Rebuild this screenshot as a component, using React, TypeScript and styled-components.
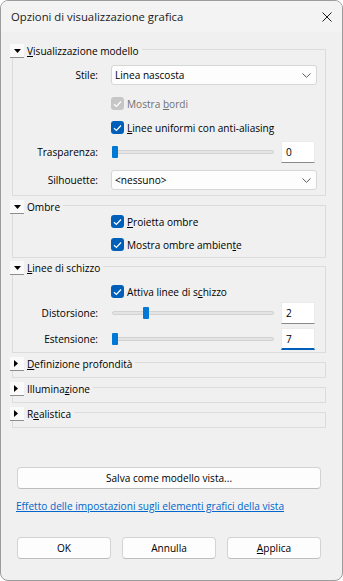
import React from 'react';
import styled, { createGlobalStyle } from 'styled-components';

const Global = createGlobalStyle`
  html, body { margin: 0; padding: 0; background: #ffffff; }
  body { font-family: "Open Sans", "Noto Sans", sans-serif; font-size: 10.1px; color: #000; }
  * { box-sizing: border-box; }
`;

const Window = styled.div`
  width: 343px;
  height: 581px;
  border: 1px solid #9c9c9c;
  border-radius: 8px;
  background: #f0f0f0;
  overflow: hidden;
  display: flex;
  flex-direction: column;
`;

const TitleBar = styled.div`
  height: 31px;
  flex: none;
  display: flex;
  align-items: center;
  justify-content: space-between;
  padding: 0 10px;
  background: #f3f3f3;
`;

const Title = styled.span`
  font-size: 11.3px;
  color: #1a1a1a;
`;

const Body = styled.div`
  display: flex;
  flex-direction: column;
  padding: 0 16px 0 11px;
`;

const GroupBox = styled.section<{ $mt: number; $pb: number }>`
  margin-top: ${(p) => p.$mt}px;
  padding-bottom: ${(p) => p.$pb}px;
  border: 1px solid #dcdcdc;
  display: flex;
  flex-direction: column;
`;

const GroupHeader = styled.div`
  display: flex;
  align-items: center;
  align-self: flex-start;
  height: 14px;
  margin: -6px 0 0 -3px;
  padding-right: 3px;
  background: #f0f0f0;
`;

const Toggle = styled.span`
  width: 14px;
  height: 14px;
  flex: none;
  display: flex;
  align-items: center;
  padding-left: 4px;
  background: #fafafa;
  border-bottom: 1px solid #8e8e8e;
`;

const GroupTitle = styled.span`
  margin-left: 3px;
  line-height: 14px;
  white-space: nowrap;
`;

const Acc = styled.span`
  text-decoration: underline;
  text-underline-offset: 1px;
`;

const FieldRow = styled.div<{ $mt: number }>`
  display: grid;
  grid-template-columns: 85px auto;
  column-gap: 13px;
  align-items: center;
  margin-top: ${(p) => p.$mt}px;
  padding-right: 9px;
`;

const FieldLabel = styled.span`
  justify-self: end;
  white-space: nowrap;
`;

const SelectBox = styled.div`
  width: 206px;
  height: 20px;
  background: #fdfdfd;
  border: 1px solid #d6d6d6;
  border-radius: 3px;
  display: flex;
  align-items: center;
  justify-content: space-between;
  padding: 0 5px 0 3px;
`;

const CheckRow = styled.label<{ $mt: number; $disabled?: boolean }>`
  display: flex;
  align-items: center;
  height: 15px;
  margin-top: ${(p) => p.$mt}px;
  margin-left: 98px;
  color: ${(p) => (p.$disabled ? '#707070' : '#000')};
  white-space: nowrap;
`;

const CheckBox = styled.span<{ $disabled?: boolean }>`
  width: 13px;
  height: 13px;
  flex: none;
  border-radius: 3px;
  background: ${(p) => (p.$disabled ? '#c6c6c6' : '#005fb8')};
  display: inline-flex;
  align-items: center;
  justify-content: center;
  margin-right: 3px;
`;

const SliderCell = styled.div`
  display: flex;
  align-items: center;
`;

const Track = styled.div`
  position: relative;
  width: 162px;
  height: 4px;
  margin-left: 1px;
  background: #e4e4e4;
  border: 1px solid #d2d2d2;
  border-radius: 2px;
`;

const Thumb = styled.span`
  position: absolute;
  top: -5px;
  width: 6px;
  height: 12px;
  background: #0078d4;
  border-radius: 1px;
`;

const NumInput = styled.div<{ $focused?: boolean }>`
  width: 34px;
  height: 22px;
  margin-left: 7px;
  background: #ffffff;
  border: 1px solid #ebebeb;
  border-bottom: ${(p) => (p.$focused ? '2px solid #005fb8' : '1px solid #8a8a8a')};
  display: flex;
  align-items: center;
  padding-left: 4px;
  padding-top: ${(p) => (p.$focused ? 1 : 0)}px;
`;

const Footer = styled.div`
  display: flex;
  flex-direction: column;
  padding: 0 6px 0 5px;
`;

const PushButton = styled.button`
  height: 22px;
  background: #fdfdfd;
  border: 1px solid #d3d3d3;
  border-bottom-color: #bdbdbd;
  border-radius: 4px;
  font: inherit;
  color: #000;
  padding: 0;
`;

const WideButton = styled(PushButton)`
  margin-top: 39px;
  width: 304px;
`;

const HelpLink = styled.a`
  margin-top: 10px;
  margin-left: -1px;
  line-height: 15px;
  color: #0066cc;
  text-decoration: underline;
  text-underline-offset: 1px;
  white-space: nowrap;
`;

const ButtonRow = styled.div`
  margin-top: 23px;
  display: grid;
  grid-template-columns: repeat(3, 94px);
  column-gap: 11px;
`;

const Chevron = () => (
  <svg width="9" height="5" viewBox="0 0 9 5">
    <path d="M0.5 0.5 L4.5 4.3 L8.5 0.5" fill="none" stroke="#5a5a5a" strokeWidth="1" />
  </svg>
);

const Check = () => (
  <svg width="9" height="8" viewBox="0 0 9 8">
    <path d="M1 4.2 L3.4 6.5 L8 1.5" fill="none" stroke="#ffffff" strokeWidth="1.2" />
  </svg>
);

const TriDown = () => (
  <svg width="7" height="4" viewBox="0 0 7 4">
    <polygon points="0,0 7,0 3.5,4" fill="#000" />
  </svg>
);

const TriRight = () => (
  <svg width="4" height="7" viewBox="0 0 4 7">
    <polygon points="0,0 4,3.5 0,7" fill="#000" />
  </svg>
);

const CloseIcon = () => (
  <svg width="10" height="10" viewBox="0 0 10 10">
    <path d="M0.5 0.5 L9.5 9.5 M9.5 0.5 L0.5 9.5" stroke="#1c1c1c" strokeWidth="1" />
  </svg>
);

const Header: React.FC<{ open: boolean; children: React.ReactNode }> = ({ open, children }) => (
  <GroupHeader>
    <Toggle>{open ? <TriDown /> : <TriRight />}</Toggle>
    <GroupTitle>{children}</GroupTitle>
  </GroupHeader>
);

const Checkbox: React.FC<{ mt: number; disabled?: boolean; children: React.ReactNode }> = ({ mt, disabled, children }) => (
  <CheckRow $mt={mt} $disabled={disabled}>
    <CheckBox $disabled={disabled}>
      <Check />
    </CheckBox>
    <span>{children}</span>
  </CheckRow>
);

const Slider: React.FC<{ frac: number; value: string; focused?: boolean }> = ({ frac, value, focused }) => (
  <SliderCell>
    <Track>
      <Thumb style={{ left: `${frac * 154 - 1}px` }} />
    </Track>
    <NumInput $focused={focused}>{value}</NumInput>
  </SliderCell>
);

export default function App() {
  return (
    <>
      <Global />
      <Window>
        <TitleBar>
          <Title>Opzioni di visualizzazione grafica</Title>
          <CloseIcon />
        </TitleBar>
        <Body>
          <GroupBox $mt={17} $pb={5}>
            <Header open>
              <Acc>V</Acc>isualizzazione modello
            </Header>
            <FieldRow $mt={7}>
              <FieldLabel>Stile:</FieldLabel>
              <SelectBox>
                <span>Linea nascosta</span>
                <Chevron />
              </SelectBox>
            </FieldRow>
            <Checkbox mt={11} disabled>
              Mostra <Acc>b</Acc>ordi
            </Checkbox>
            <Checkbox mt={9}>
              <Acc>L</Acc>inee uniformi con anti-aliasing
            </Checkbox>
            <FieldRow $mt={6}>
              <FieldLabel>Trasparenza:</FieldLabel>
              <Slider frac={0} value="0" />
            </FieldRow>
            <FieldRow $mt={7}>
              <FieldLabel>Silhouette:</FieldLabel>
              <SelectBox>
                <span>&lt;nessuno&gt;</span>
                <Chevron />
              </SelectBox>
            </FieldRow>
          </GroupBox>

          <GroupBox $mt={9} $pb={5}>
            <Header open>Ombre</Header>
            <Checkbox mt={0}>
              <Acc>P</Acc>roietta ombre
            </Checkbox>
            <Checkbox mt={8}>
              Mostra ombre ambien<Acc>t</Acc>e
            </Checkbox>
          </GroupBox>

          <GroupBox $mt={8} $pb={2}>
            <Header open>
              <Acc>L</Acc>inee di schizzo
            </Header>
            <Checkbox mt={9}>
              Attiva linee di s<Acc>c</Acc>hizzo
            </Checkbox>
            <FieldRow $mt={3}>
              <FieldLabel>Distorsione:</FieldLabel>
              <Slider frac={0.2} value="2" />
            </FieldRow>
            <FieldRow $mt={4}>
              <FieldLabel>Estensione:</FieldLabel>
              <Slider frac={0} value="7" focused />
            </FieldRow>
          </GroupBox>

          <GroupBox $mt={9} $pb={6}>
            <Header open={false}>
              <Acc>D</Acc>efinizione profondità
            </Header>
          </GroupBox>
          <GroupBox $mt={9} $pb={6}>
            <Header open={false}>
              Illumina<Acc>z</Acc>ione
            </Header>
          </GroupBox>
          <GroupBox $mt={9} $pb={6}>
            <Header open={false}>
              R<Acc>e</Acc>alistica
            </Header>
          </GroupBox>

          <Footer>
            <WideButton>Salva come modello vista...</WideButton>
            <HelpLink href="#">Effetto delle impostazioni sugli elementi grafici della vista</HelpLink>
            <ButtonRow>
              <PushButton>OK</PushButton>
              <PushButton>Annulla</PushButton>
              <PushButton>
                <Acc>A</Acc>pplica
              </PushButton>
            </ButtonRow>
          </Footer>
        </Body>
      </Window>
    </>
  );
}
